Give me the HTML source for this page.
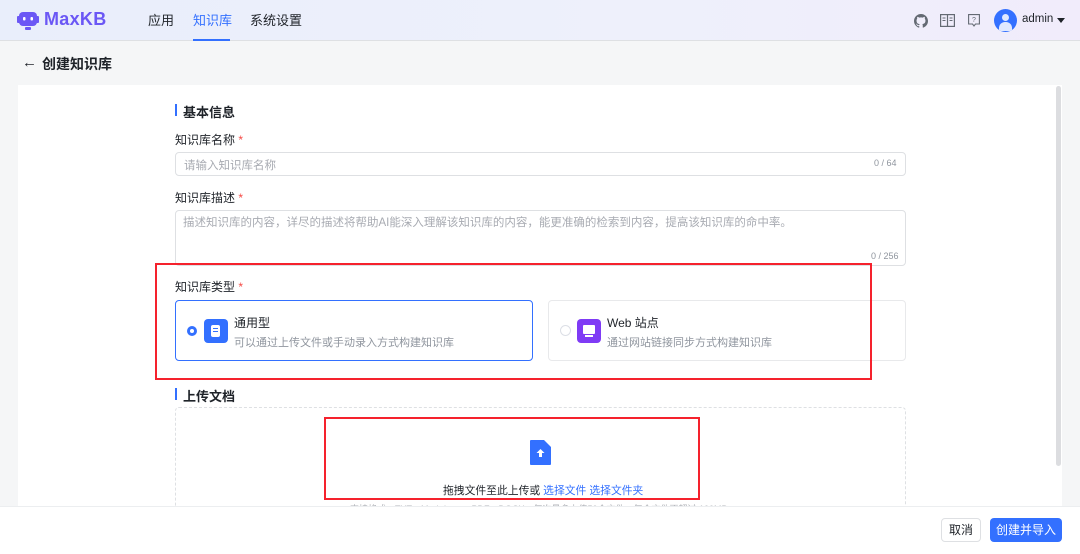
<!DOCTYPE html>
<html><head><meta charset="utf-8"><style>
*{box-sizing:border-box;margin:0;padding:0}
body{width:1080px;height:554px;overflow:hidden;background:#f5f6f7;font-family:"Liberation Sans","Noto Sans CJK SC",sans-serif;position:relative;color:#1f2329}
.a{position:absolute}
.hdr{left:0;top:0;width:1080px;height:41px;background:linear-gradient(90deg,#e9eefb,#eef0fb 60%,#f1ecfb);border-bottom:1px solid #dee0e3}
.t{font-size:13px;white-space:nowrap;line-height:16px}
.lbl{font-size:12px;color:#1f2329}
.lbl b{color:#f54a45;font-weight:normal}
.inp{border:1px solid #dee0e3;border-radius:4px;background:#fff}
.ph{font-size:11.5px;color:#a8abb2}
.red{border:2px solid #f5222d}
</style></head><body>
<div class="a hdr"></div>
<svg class="a" style="left:17px;top:12px" width="22" height="19" viewBox="0 0 22 19"><rect x="0" y="4" width="3" height="7" rx="1" fill="#6b57f5"/><rect x="19" y="4" width="3" height="7" rx="1" fill="#6b57f5"/><rect x="2" y="0" width="18" height="14" rx="4" fill="#6b57f5"/><rect x="6" y="5" width="2.5" height="3.5" rx="1" fill="#fff"/><rect x="13.5" y="5" width="2.5" height="3.5" rx="1" fill="#fff"/><rect x="8" y="15" width="6" height="3" rx="1" fill="#6b57f5"/></svg>
<div class="a" style="left:44px;top:9px;font-size:18px;font-weight:bold;color:#6b57f5;letter-spacing:0.3px">MaxKB</div>
<div class="a t" style="left:148px;top:13px;color:#1f2329">应用</div>
<div class="a t" style="left:193px;top:13px;color:#3370ff">知识库</div>
<div class="a" style="left:193px;top:39px;width:37px;height:2px;background:#3370ff"></div>
<div class="a t" style="left:250px;top:13px;color:#1f2329">系统设置</div>
<svg class="a" style="left:914px;top:14px" width="14" height="14" viewBox="0 0 16 16"><path fill="#646a73" d="M8 0C3.6 0 0 3.6 0 8c0 3.5 2.3 6.5 5.5 7.6.4.1.5-.2.5-.4v-1.4c-2.2.5-2.7-1-2.7-1-.4-.9-.9-1.2-.9-1.2-.7-.5.1-.5.1-.5.8.1 1.2.8 1.200.8.7 1.2 1.9.9 2.3.7.1-.5.3-.9.5-1.1-1.8-.2-3.6-.9-3.6-4 0-.9.3-1.6.8-2.1-.1-.2-.4-1 .1-2.1 0 0 .7-.2 2.2.8.6-.2 1.3-.3 2-.3s1.4.1 2 .3c1.5-1 2.2-.8 2.2-.8.4 1.1.2 1.9.1 2.1.5.6.8 1.3.8 2.1 0 3.1-1.9 3.7-3.6 3.900.3.3.5.8.5 1.5v2.2c0 .2.1.5.6.4C13.7 14.5 16 11.5 16 8c0-4.4-3.6-8-8-8z"/></svg>
<svg class="a" style="left:940px;top:14px" width="15" height="13" viewBox="0 0 15 13"><rect x="0.6" y="0.6" width="13.8" height="11.8" fill="none" stroke="#646a73" stroke-width="1.2"/><line x1="7.5" y1="1" x2="7.5" y2="12" stroke="#646a73" stroke-width="1.2"/><path d="M2.5 4h3M2.5 6.5h3M9.5 4h3M9.5 6.5h3" stroke="#646a73"/></svg>
<svg class="a" style="left:968px;top:14px" width="12" height="13" viewBox="0 0 12 13"><path d="M.6.6h10.8v9.4H7.5L6 12 4.5 10H.6z" fill="none" stroke="#646a73" stroke-width="1.1"/><text x="6" y="8" font-size="7" text-anchor="middle" fill="#646a73" font-family="Liberation Sans">?</text></svg>
<div class="a" style="left:994px;top:9px;width:23px;height:23px;border-radius:50%;background:#3370ff;overflow:hidden"><div class="a" style="left:8px;top:5px;width:7px;height:7px;border-radius:50%;background:#dfe8ff"></div><div class="a" style="left:5px;top:13px;width:13px;height:9px;border-radius:6px 6px 0 0;background:#dfe8ff"></div></div>
<div class="a" style="left:1022px;top:13px;font-size:11.5px;color:#1f2329">admin</div>
<div class="a" style="left:1057px;top:18px;width:0;height:0;border-left:4px solid transparent;border-right:4px solid transparent;border-top:5px solid #1f2329"></div>

<div class="a" style="left:22px;top:54px;font-size:15px;color:#1f2329">←</div>
<div class="a" style="left:42px;top:54px;font-size:14px;font-weight:bold">创建知识库</div>

<div class="a" style="left:18px;top:85px;width:1044px;height:425px;background:#fff"></div>
<div class="a" style="left:1056px;top:86px;width:5px;height:380px;background:#dcdde0;border-radius:3px"></div>

<div class="a" style="left:175px;top:104px;width:2px;height:12px;background:#3370ff"></div>
<div class="a" style="left:183px;top:102px;font-size:13px;font-weight:bold">基本信息</div>
<div class="a lbl" style="left:175px;top:131px">知识库名称 <b>*</b></div>
<div class="a inp" style="left:175px;top:152px;width:731px;height:24px"></div>
<div class="a ph" style="left:184px;top:157px">请输入知识库名称</div>
<div class="a" style="left:874px;top:158px;font-size:9px;color:#8f959e">0 / 64</div>
<div class="a lbl" style="left:175px;top:189px">知识库描述 <b>*</b></div>
<div class="a inp" style="left:175px;top:210px;width:731px;height:56px"></div>
<div class="a ph" style="left:183px;top:214px">描述知识库的内容，详尽的描述将帮助AI能深入理解该知识库的内容，能更准确的检索到内容，提高该知识库的命中率。</div>
<div class="a" style="left:871px;top:251px;font-size:9px;color:#8f959e">0 / 256</div>

<div class="a lbl" style="left:175px;top:278px">知识库类型 <b>*</b></div>
<div class="a" style="left:175px;top:300px;width:358px;height:61px;border:1px solid #3370ff;border-radius:4px"></div>
<div class="a" style="left:187px;top:326px;width:10px;height:10px;border-radius:50%;background:#3370ff"><div class="a" style="left:3px;top:3px;width:4px;height:4px;border-radius:50%;background:#fff"></div></div>
<div class="a" style="left:204px;top:319px;width:24px;height:24px;border-radius:4px;background:#3370ff"><div class="a" style="left:7px;top:6px;width:9px;height:12px;border-radius:2px;background:#fff"></div><div class="a" style="left:9px;top:9px;width:5px;height:1px;background:#3370ff"></div><div class="a" style="left:9px;top:12px;width:5px;height:1px;background:#3370ff"></div></div>
<div class="a" style="left:234px;top:314px;font-size:12px">通用型</div>
<div class="a" style="left:234px;top:334px;font-size:11px;color:#8f959e">可以通过上传文件或手动录入方式构建知识库</div>
<div class="a" style="left:548px;top:300px;width:358px;height:61px;border:1px solid #e8e9eb;border-radius:4px"></div>
<div class="a" style="left:560px;top:325px;width:11px;height:11px;border-radius:50%;border:1px solid #dcdfe6"></div>
<div class="a" style="left:577px;top:319px;width:24px;height:24px;border-radius:4px;background:#7f3bf5"><div class="a" style="left:6px;top:6px;width:12px;height:9px;border-radius:1px;background:#fff"></div><div class="a" style="left:8px;top:16px;width:8px;height:2px;background:#fff"></div></div>
<div class="a" style="left:607px;top:314px;font-size:12px">Web 站点</div>
<div class="a" style="left:607px;top:334px;font-size:11px;color:#8f959e">通过网站链接同步方式构建知识库</div>
<div class="a red" style="left:155px;top:263px;width:717px;height:117px"></div>

<div class="a" style="left:175px;top:388px;width:2px;height:12px;background:#3370ff"></div>
<div class="a" style="left:183px;top:386px;font-size:13px;font-weight:bold">上传文档</div>
<div class="a" style="left:175px;top:407px;width:731px;height:110px;border:1px dashed #dee0e3;border-radius:4px"></div>
<svg class="a" style="left:530px;top:440px" width="21" height="25" viewBox="0 0 21 25"><path d="M1 0h13l7 7v17a1 1 0 0 1-1 1H1a1 1 0 0 1-1-1V1a1 1 0 0 1 1-1z" fill="#3370ff"/><path d="M10.5 9l-4 4h2.5v4h3v-4h2.5z" fill="#fff"/></svg>
<div class="a" style="left:443px;top:482px;font-size:10.8px;color:#1f2329;white-space:nowrap">拖拽文件至此上传或 <span style="color:#3370ff">选择文件 选择文件夹</span></div>
<div class="a" style="left:350px;top:502px;font-size:9px;color:#b0b3b8;white-space:nowrap">支持格式：TXT、Markdown、PDF、DOCX，每次最多上传50个文件，每个文件不超过 100MB</div>
<div class="a red" style="left:324px;top:417px;width:376px;height:83px"></div>

<div class="a" style="left:0;top:506px;width:1080px;height:48px;background:#fff;border-top:1px solid #eceef0"></div>
<div class="a" style="left:941px;top:518px;width:40px;height:24px;border:1px solid #dee0e3;border-radius:4px;font-size:12px;text-align:center;line-height:22px;background:#fff">取消</div>
<div class="a" style="left:990px;top:518px;width:72px;height:24px;border-radius:4px;background:#3370ff;color:#fff;font-size:12px;text-align:center;line-height:24px">创建并导入</div>
</body></html>
